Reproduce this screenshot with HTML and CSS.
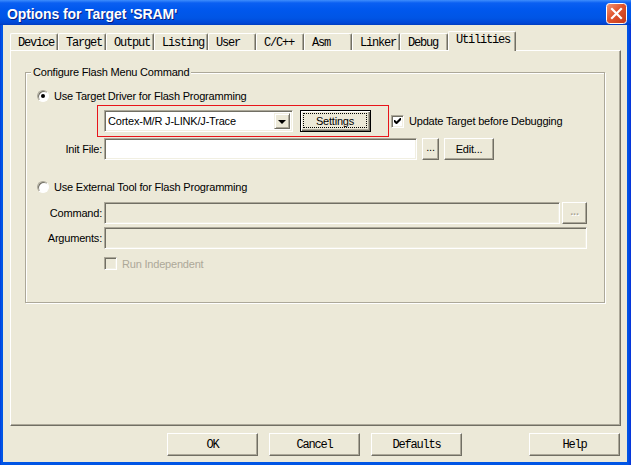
FILE: index.html
```html
<!DOCTYPE html>
<html lang="en">
    <head>
        <meta charset="UTF-8" />
        <title>Options for Target 'SRAM'</title>
        <link rel="stylesheet" href="styles.css">
    </head>
    <body>
        <div class="window">
            <div class="titlebar">
                <span class="title">Options for Target 'SRAM'</span>
                <span class="close">
                    <svg width="21" height="21" viewBox="0 0 21 21">
                        <defs>
                            <linearGradient id="closebg" x1="0" y1="0" x2="1" y2="1">
                                <stop offset="0" stop-color="#F19A7C" />
                                <stop offset="0.45" stop-color="#E1552E" />
                                <stop offset="1" stop-color="#C2391A" />
                            </linearGradient>
                        </defs>
                        <rect x="0.5" y="0.5" width="20" height="20" rx="3" fill="url(#closebg)" stroke="#fff" />
                        <path d="M6 6 L15 15 M15 6 L6 15" stroke="#fff" stroke-width="2.2" stroke-linecap="square" />
                    </svg>
                </span>
            </div>
            <div class="client">
                <div class="tabs">
                    <div class="tab">Device</div>
                    <div class="tab">Target</div>
                    <div class="tab">Output</div>
                    <div class="tab wide">Listing</div>
                    <div class="tab">User</div>
                    <div class="tab">C/C++</div>
                    <div class="tab">Asm</div>
                    <div class="tab">Linker</div>
                    <div class="tab">Debug</div>
                    <div class="tab active">Utilities</div>
                </div>
                <div class="panel">
                    <fieldset class="group">
                        <legend>Configure Flash Menu Command</legend>
                        <div class="group-body">
                            <div class="option-row">
                                <span class="radio on"></span>
                                <span>Use Target Driver for Flash Programming</span>
                            </div>
                            <div class="driver-row">
                                <div class="mark">
                                    <div class="combo">
                                        <span class="combo-text">Cortex-M/R J-LINK/J-Trace</span>
                                        <span class="combo-btn"><span class="arrow"></span></span>
                                    </div>
                                    <div class="btn default"><span class="focus">Settings</span></div>
                                </div>
                                <div class="check-row">
                                    <span class="checkbox">
                                        <svg width="7" height="7" viewBox="0 0 7 7">
                                            <path d="M0 2 L0 4 L2 6 L3 6 L7 2 L7 0 L6 0 L2.5 3.5 L1 2 Z" fill="#000" />
                                        </svg>
                                    </span>
                                    <span>Update Target before Debugging</span>
                                </div>
                            </div>
                            <div class="field-row init">
                                <span class="field-label">Init File:</span>
                                <span class="edit white init-edit"></span>
                                <div class="btn dots">...</div>
                                <div class="btn edit-btn">Edit...</div>
                            </div>
                            <div class="option-row second">
                                <span class="radio"></span>
                                <span>Use External Tool for Flash Programming</span>
                            </div>
                            <div class="field-row command">
                                <span class="field-label">Command:</span>
                                <span class="edit cmd-edit"></span>
                                <div class="btn dots off">...</div>
                            </div>
                            <div class="field-row args">
                                <span class="field-label">Arguments:</span>
                                <span class="edit args-edit"></span>
                            </div>
                            <div class="check-row run off">
                                <span class="checkbox off"></span>
                                <span>Run Independent</span>
                            </div>
                        </div>
                    </fieldset>
                </div>
                <div class="buttons">
                    <div class="btn big">OK</div>
                    <div class="btn big">Cancel</div>
                    <div class="btn big">Defaults</div>
                    <div class="btn big help">Help</div>
                </div>
            </div>
        </div>
    </body>
</html>
```
FILE: styles.css
```css
* {
    margin: 0px;
    padding: 0px;
    box-sizing: border-box;
}
body {
    width: 631px;
    height: 465px;
    overflow: hidden;
    background-color: #ECE9D8;
    font-family: "Liberation Sans", Arial, sans-serif;
    font-size: 11px;
    letter-spacing: -0.2px;
    color: #000;
}

/* window frame */
.window {
    width: 631px;
    height: 465px;
    display: flex;
    flex-direction: column;
    background: linear-gradient(to right, #0831D9 0, #0055E5 1px, #0055E5 628px, #0831D9 631px);
}
.titlebar {
    height: 25px;
    display: flex;
    align-items: center;
    justify-content: space-between;
    padding: 0 4px 0 7px;
    background: linear-gradient(to bottom, #3E8DFC 0, #0A5FF2 3px, #0058EE 9px, #0055E5 18px, #0047D6 23px, #003DBF 25px);
}
.title {
    color: #fff;
    font-weight: bold;
    font-size: 14px;
    letter-spacing: -0.1px;
    text-shadow: 1px 1px 0 #0A1E80;
    margin-top: 2px;
}
.close {
    width: 21px;
    height: 21px;
    margin-top: 1px;
}
.close svg {
    display: block;
}
.client {
    flex: 1;
    margin: 0 4px 3px 3px;
    background-color: #ECE9D8;
    padding: 6px 6px 0 7px;
    display: flex;
    flex-direction: column;
}

/* tab strip */
.tabs {
    display: flex;
    align-items: flex-end;
    height: 19px;
    font-family: "Liberation Mono", "Courier New", monospace;
    font-size: 12px;
    letter-spacing: -1.2px;
    position: relative;
    z-index: 1;
}
.tab {
    width: 48px;
    height: 17px;
    padding: 2px 0 0 7px;
    border-top: 1px solid #fff;
    border-left: 1px solid #fff;
    border-right: 1px solid #716F64;
    border-radius: 2px 2px 0 0;
    box-shadow: inset -1px 0 0 #ACA899;
    line-height: 15px;
}
.tab.wide {
    width: 54px;
}
.tab.active {
    width: 68px;
    height: 20px;
    margin-bottom: -1px;
    padding-top: 1px;
    background-color: #ECE9D8;
}
.panel {
    height: 376px;
    border-top: 1px solid #fff;
    border-left: 1px solid #fff;
    border-right: 1px solid #716F64;
    border-bottom: 1px solid #716F64;
    box-shadow: inset -1px -1px 0 #ACA899;
    padding: 15px 0 0 14px;
}

/* group box */
.group {
    width: 580px;
    height: 237px;
    border: 1px solid #ACA899;
    box-shadow: inset 1px 1px 0 #fff, 1px 1px 0 #fff;
}
.group legend {
    margin-left: 5px;
    padding: 0 2px;
    line-height: 13px;
    background-color: #ECE9D8;
}
.group-body {
    display: flex;
    flex-direction: column;
    padding: 10px 0 0 11px;
}
.option-row {
    height: 13px;
    display: flex;
    align-items: center;
    gap: 5px;
}
.option-row.second {
    margin-top: 20px;
}
.radio {
    width: 12px;
    height: 12px;
    border-radius: 50%;
    border: 1px solid;
    border-color: #ACA899 #fff #fff #ACA899;
    background-color: #fff;
    box-shadow: inset 1px 1px 0 #716F64;
    display: flex;
    align-items: center;
    justify-content: center;
}
.radio.on::after {
    content: "";
    width: 4px;
    height: 4px;
    border-radius: 50%;
    background-color: #000;
}

/* driver selection */
.driver-row {
    margin-top: 3px;
    display: flex;
    align-items: center;
    gap: 2px;
}
.mark {
    width: 292px;
    height: 32px;
    margin-left: 60px;
    border: 1px solid #E8141A;
    padding: 4px 0 0 6px;
    display: flex;
    align-items: flex-start;
    gap: 7px;
}
.combo {
    width: 189px;
    height: 22px;
    display: flex;
    align-items: center;
    background-color: #fff;
    border: 1px solid;
    border-color: #ACA899 #fff #fff #ACA899;
    box-shadow: inset 1px 1px 0 #716F64, inset -1px -1px 0 #F1EFE2;
    padding: 2px;
}
.combo-text {
    flex: 1;
    padding-left: 1px;
}
.combo-btn {
    width: 16px;
    height: 16px;
    display: flex;
    align-items: center;
    justify-content: center;
    background-color: #ECE9D8;
    border: 1px solid;
    border-color: #F1EFE2 #716F64 #716F64 #F1EFE2;
    box-shadow: inset 1px 1px 0 #fff, inset -1px -1px 0 #ACA899;
}
.arrow {
    width: 0;
    height: 0;
    border-left: 4px solid transparent;
    border-right: 4px solid transparent;
    border-top: 4px solid #000;
    margin-top: 1px;
}
.check-row {
    display: flex;
    align-items: center;
    gap: 5px;
}
.checkbox {
    width: 13px;
    height: 13px;
    border: 1px solid;
    border-color: #ACA899 #fff #fff #ACA899;
    box-shadow: inset 1px 1px 0 #716F64, inset -1px -1px 0 #F1EFE2;
    background-color: #fff;
    display: flex;
    align-items: center;
    justify-content: center;
}
.checkbox svg {
    display: block;
}
.checkbox.off {
    background-color: #ECE9D8;
}
.check-row.off {
    color: #ACA899;
}
.check-row.run {
    margin-top: 8px;
    margin-left: 67px;
}

/* buttons */
.btn {
    height: 22px;
    display: flex;
    align-items: center;
    justify-content: center;
    background-color: #ECE9D8;
    border: 1px solid;
    border-color: #fff #716F64 #716F64 #fff;
    box-shadow: inset -1px -1px 0 #ACA899;
}
.btn.default {
    width: 71px;
    border-color: #000;
    box-shadow: inset 1px 1px 0 #fff, inset -1px -1px 0 #716F64, inset -2px -2px 0 #ACA899;
    padding: 2px 3px 3px 2px;
}
.btn .focus {
    flex: 1;
    height: 100%;
    border: 1px dotted #000;
    display: flex;
    align-items: center;
    justify-content: center;
}
.btn.dots {
    width: 17px;
    padding-bottom: 4px;
}
.btn.dots.off {
    width: 25px;
    height: 22px;
    color: #ACA899;
    text-shadow: 1px 1px 0 #fff;
    font-weight: bold;
}
.btn.edit-btn {
    width: 50px;
}
.btn.big {
    width: 91px;
    height: 23px;
    font-family: "Liberation Mono", "Courier New", monospace;
    font-size: 12px;
    letter-spacing: -1.2px;
}

/* labelled edit fields */
.field-row {
    display: flex;
    align-items: center;
    height: 22px;
}
.field-row.init {
    margin-top: 1px;
}
.field-row.command {
    margin-top: 9px;
}
.field-row.args {
    margin-top: 3px;
}
.field-label {
    width: 65px;
    text-align: right;
    margin-right: 2px;
}
.edit {
    height: 22px;
    border: 1px solid;
    border-color: #ACA899 #fff #fff #ACA899;
    box-shadow: inset 1px 1px 0 #716F64, inset -1px -1px 0 #F1EFE2;
    background-color: #ECE9D8;
}
.edit.white {
    background-color: #fff;
}
.init-edit {
    width: 313px;
    margin-right: 5px;
}
.init .edit-btn {
    margin-left: 5px;
}
.cmd-edit {
    width: 456px;
    margin-right: 2px;
}
.args-edit {
    width: 483px;
}

/* dialog buttons */
.buttons {
    display: flex;
    gap: 11px;
    padding: 7px 1px 0 157px;
}
.buttons .help {
    margin-left: auto;
}
```
